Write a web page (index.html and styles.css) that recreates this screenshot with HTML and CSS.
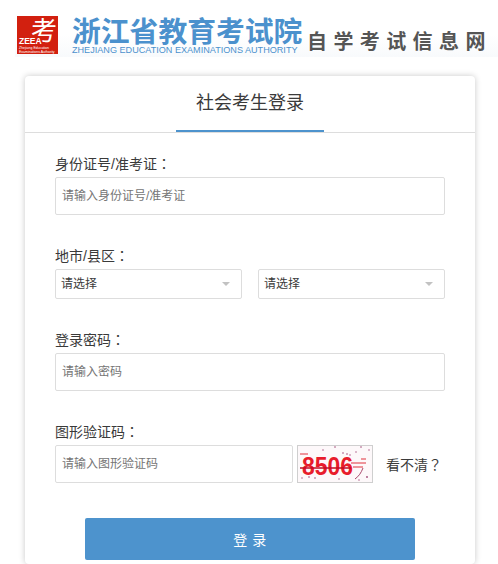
FILE: index.html
```html
<!DOCTYPE html>
<html lang="zh-CN">
<head>
<meta charset="utf-8">
<title>社会考生登录</title>
<link rel="stylesheet" href="styles.css">
</head>
<body>
<header class="banner">
  <div class="mark">
    <span class="mark-char">考</span>
    <span class="mark-abbr">ZEEA</span>
    <span class="mark-sub">Zhejiang Education<br>Examinations Authority</span>
  </div>
  <div class="org">
    <div class="org-cn">浙江省教育考试院</div>
    <div class="org-en">ZHEJIANG EDUCATION EXAMINATIONS AUTHORITY</div>
  </div>
  <div class="site">自学考试信息网</div>
</header>
<main class="card">
  <div class="tabs"><span class="tab">社会考生登录</span></div>
  <form class="form">
    <div class="field field-id">
      <label class="label">身份证号/准考证<span class="punct" lang="zh-Hant">：</span></label>
      <div class="input">请输入身份证号/准考证</div>
    </div>
    <div class="field field-area">
      <label class="label">地市/县区<span class="punct" lang="zh-Hant">：</span></label>
      <div class="selects">
        <div class="select"><span class="select-text">请选择</span><i class="caret"></i></div>
        <div class="select"><span class="select-text">请选择</span><i class="caret"></i></div>
      </div>
    </div>
    <div class="field field-pass">
      <label class="label">登录密码<span class="punct" lang="zh-Hant">：</span></label>
      <div class="input">请输入密码</div>
    </div>
    <div class="field field-code">
      <label class="label">图形验证码<span class="punct" lang="zh-Hant">：</span></label>
      <div class="code-row">
        <div class="input input-code">请输入图形验证码</div>
        <svg class="captcha" viewBox="0 0 76 38" width="76" height="38" aria-label="验证码">
          <rect x="0" y="0" width="76" height="38" fill="#fdf8fa"/>
          <text x="5" y="30" class="captcha-text" textLength="51" lengthAdjust="spacingAndGlyphs">8506</text>
          <path d="M3 9H11M54 18H69M64 14H69M56 22H66" fill="none" stroke="#e0303c" stroke-width="1"/>
          <path d="M66 23C64 28 62 31 58 34" fill="none" stroke="#a8486c" stroke-width="1"/>
          <path d="M3 23H54" fill="none" stroke="#c00c24" stroke-width="1.6"/>
          <g fill="#a04a78">
            <circle cx="38" cy="2" r=".8"/><circle cx="64" cy="2" r=".8"/><circle cx="26" cy="5" r=".7"/><circle cx="46" cy="8" r=".8"/><circle cx="50" cy="9" r=".8"/><circle cx="53" cy="10" r=".7"/><circle cx="59" cy="7" r=".7"/><circle cx="12" cy="32" r=".8"/><circle cx="18" cy="33" r=".8"/><circle cx="70" cy="32" r=".9"/><circle cx="5" cy="33" r=".7"/><circle cx="42" cy="34" r=".7"/><circle cx="62" cy="35" r=".7"/><circle cx="72" cy="5" r=".7"/>
          </g>
          <rect x=".5" y=".5" width="75" height="37" fill="none" stroke="#cfcfcf"/>
        </svg>
        <span class="refresh">看不清<span class="punct" lang="zh-Hant">？</span></span>
      </div>
    </div>
    <div class="actions"><button type="button" class="submit">登 录</button></div>
  </form>
</main>
</body>
</html>
```

FILE: styles.css
```css
* { box-sizing: border-box; }
html, body { margin: 0; padding: 0; height: 100%; overflow: hidden; background: #fff; }
body {
  font-family: "Liberation Sans", "Noto Sans CJK SC", sans-serif;
  font-size: 14px;
  color: #3a3a3a;
}
.banner {
  height: 57px;
  margin: 0 0 19px 15px;
  display: flex;
  align-items: flex-start;
  padding: 16px 0 0 2px;
  background: linear-gradient(#fff 60%, #f8fafc);
}
.mark {
  position: relative;
  width: 41px;
  height: 38px;
  background: #d2200f;
  color: #fff;
  flex: none;
}
.mark-char {
  position: absolute;
  left: 14px;
  top: 0;
  font: 26px/26px "Noto Sans CJK SC", sans-serif;
}
.mark-abbr {
  position: absolute;
  left: 2px;
  top: 21px;
  font: bold 8.5px/8px "Liberation Sans", sans-serif;
}
.mark-sub {
  position: absolute;
  left: 2px;
  top: 30px;
  font: 3.5px/4px "Liberation Sans", sans-serif;
  white-space: nowrap;
}
.org { margin-left: 14px; width: 235px; color: #4b91cd; flex: none; }
.org-cn {
  font: bold 28.8px/30px "Noto Sans CJK SC", sans-serif;
  white-space: nowrap;
  margin-top: -1px;
}
.org-en {
  font: 9.1px/12px "Liberation Sans", sans-serif;
  white-space: nowrap;
  margin-top: -1px;
}
.site {
  margin: 13px 0 0 0;
  font: bold 20px/24px "Noto Sans CJK SC", sans-serif;
  letter-spacing: 6.4px;
  color: #555;
  white-space: nowrap;
}
.card {
  margin: 0 23px 0 25px;
  background: #fff;
  border-radius: 4px;
  box-shadow: 0 0 6px rgba(0, 0, 0, .22);
  height: 488px;
}
.tabs {
  height: 57px;
  border-bottom: 1px solid #ddd;
  display: flex;
  justify-content: center;
}
.tab {
  width: 148px;
  height: 56px;
  text-align: center;
  font-size: 18px;
  line-height: 55px;
  border-bottom: 2px solid #4d93cd;
  color: #3a3a3a;
}
.form { padding: 0 30px; }
.field-id { padding-top: 20px; }
.field-area { padding-top: 30px; }
.field-pass { padding-top: 30px; }
.field-code { padding-top: 30px; }
.label {
  display: block;
  height: 20px;
  font-size: 14px;
  line-height: 20px;
  margin-bottom: 4px;
}
.punct { font-family: "Noto Sans CJK TC", sans-serif; }
.input {
  height: 38px;
  border: 1px solid #ddd;
  border-radius: 2px;
  padding: 0 6px;
  line-height: 36px;
  font-size: 12px;
  color: #757575;
}
.selects { display: flex; gap: 16px; }
.select {
  flex: 1;
  height: 30px;
  border: 1px solid #ddd;
  border-radius: 2px;
  padding: 0 5px;
  display: flex;
  align-items: center;
  justify-content: space-between;
  font-size: 12px;
  color: #3a3a3a;
}
.select-text { line-height: 26px; }
.caret {
  width: 0;
  height: 0;
  margin-right: 6px;
  border: 4px solid transparent;
  border-top-color: #c2c2c2;
  border-bottom-width: 0;
}
.code-row { display: flex; align-items: center; }
.input-code { width: 238px; flex: none; }
.captcha { margin-left: 4px; flex: none; display: block; }
.captcha-text {
  font: bold 26px "Liberation Sans", sans-serif;
  fill: #e81c2c;
}
.refresh { margin-left: 13px; font-size: 14px; white-space: nowrap; }
.actions { display: flex; justify-content: center; padding-top: 35px; }
.submit {
  width: 330px;
  height: 42px;
  border: 0;
  border-radius: 2px;
  background: #4d93cd;
  color: #fff;
  font: 14px "Liberation Sans", "Noto Sans CJK SC", sans-serif;
  letter-spacing: .5px;
}
```
